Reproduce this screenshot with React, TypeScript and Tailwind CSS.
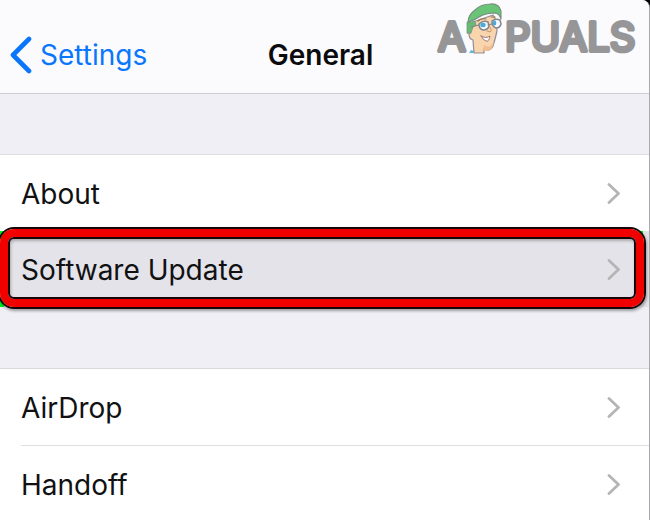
function Chevron() {
  return (
    <svg className="h-[22px] w-[14px] shrink-0" viewBox="0 0 14 22" fill="none" stroke="#b5b5b8" strokeWidth="2.8" strokeLinecap="round" strokeLinejoin="round" aria-hidden="true">
      <path d="M2 1.5 L11.5 10.5 L2 19.5" />
    </svg>
  );
}

function Row({ label }: { label: string }) {
  return (
    <button type="button" className="flex h-[76px] w-full items-center justify-between pt-[2px] pr-7 text-left text-[28px] leading-9 text-[#111113]">
      <span>{label}</span>
      <Chevron />
    </button>
  );
}

function Logo() {
  return (
    <svg className="absolute top-0 right-0 h-[72px] w-[216px]" viewBox="433 0 216 72" role="img" aria-label="Appuals">
      <g fill="#969698" stroke="#969698" strokeWidth="4" strokeLinejoin="round" strokeLinecap="round" fontFamily="Inter, sans-serif" fontWeight="400" fontSize="40">
        <text x="438" y="51">A</text>
        <text x="505" y="51">PUALS</text>
      </g>
      <g strokeLinejoin="round" strokeLinecap="round">
        <path d="M469 53 L471 50 Q475 52 481 50 L483 53Z" fill="#61b9df" />
        <path d="M470 31 Q467 24 473 22 L493 15 L496 20 L497 31 Q495 40 493 46 Q490 52 484 49 L484 53 L474 53 L473 40 Q469 39 469 34Z" fill="#f9d5ae" stroke="#918d96" strokeWidth="1.2" />
        <path d="M484 45 Q490 50 494 41 Q493 51 487 51 L483 50Z" fill="#f2bd8e" />
        <path d="M467 33 L467 22 Q472 22 475 21 L476 25 L473 27 L471 33Z" fill="#66bd72" stroke="#778b7e" strokeWidth="0.7" />
        <path d="M468 22 Q468 15 475 10 Q481 4 490 4 Q499 3 501 11 L501 19 Q500 15 496 13 Q485 13 479 17 Q475 20 468 22Z" fill="#69c478" stroke="#778b7e" strokeWidth="1.1" />
        <path d="M479 24 Q483 20 488 22 L489 26 Q488 30 483 30 Q479 29 479 24Z" fill="#f5faff" stroke="#85858b" strokeWidth="1.5" />
        <path d="M492 21 Q496 18 500 20 L501 24 Q500 28 496 28 Q492 27 492 21Z" fill="#f5faff" stroke="#85858b" strokeWidth="1.5" />
        <path d="M471 27 L479 25 M488 25 L492 24" fill="none" stroke="#85858b" strokeWidth="1.1" />
        <ellipse cx="483" cy="25" rx="2.7" ry="2.2" fill="#49a9d9" />
        <ellipse cx="494.5" cy="23" rx="1.8" ry="2.5" fill="#49a9d9" />
        <path d="M478 21 Q481 18 486 19 M491 17 L495 17" fill="none" stroke="#95734f" strokeWidth="1.2" />
        <path d="M489 26 Q493 30 490 32 L487 31" fill="none" stroke="#c59068" strokeWidth="1" />
        <path d="M481 36 Q486 39 490 36 Q489 42 486 41 Q483 40 481 36Z" fill="#fff" stroke="#9c7777" strokeWidth="1" />
      </g>
    </svg>
  );
}

export default function App() {
  return (
    <div className="min-h-screen bg-black font-['Inter','Liberation_Sans',sans-serif]">
      <main className="relative min-h-screen overflow-hidden rounded-tr-lg border-r border-[#a9a9ad] bg-[#f0eff5]">
        <header className="border-b border-[#d0d0d3] bg-[#fbfbfd]">
          <div className="grid h-[93px] grid-cols-[1fr_auto_1fr] items-center pt-[17px] pr-4 pl-2 text-[28px] leading-9">
            <button type="button" className="flex items-center gap-2 justify-self-start text-[#0a76fb]">
              <svg className="h-[38px] w-[24px]" viewBox="0 0 24 38" fill="none" stroke="currentColor" strokeWidth="4.6" strokeLinecap="round" strokeLinejoin="round" aria-hidden="true">
                <path d="M21 3 L5 19 L21 35" />
              </svg>
              Settings
            </button>
            <h1 className="font-semibold text-[#0b0b0d]">General</h1>
          </div>
          <Logo />
        </header>

        <section className="mt-[60px] border-t border-[#dddde2]">
          <div className="bg-white pl-[21px]">
            <Row label="About" />
          </div>
          <div className="relative bg-[#e4e3e9] pl-[21px]">
            <Row label="Software Update" />
            <span className="absolute top-0 left-0 h-2 w-1 bg-[#00ef18]" />
            <span className="absolute bottom-0 left-0 h-2 w-1 bg-[#00ef18]" />
            <span className="absolute top-0 right-[6px] h-2 w-1 bg-[#00ef18]" />
            <div className="pointer-events-none absolute -top-1 right-[3px] -bottom-[2px] -left-[2px] rounded-[16px] border-2 border-[#170608] shadow-[1px_2px_3px_rgba(0,0,0,0.35)]">
              <div className="h-full rounded-[14px] border-8 border-[#f10000]">
                <div className="h-full rounded-[6px] border-2 border-[#170608] shadow-[inset_1px_2px_3px_rgba(0,0,0,0.25)]" />
              </div>
            </div>
          </div>
        </section>

        <section className="mt-[61px] border-t border-[#d9d9de] bg-white pl-[21px]">
          <Row label="AirDrop" />
          <div className="border-t border-[#dedee1]">
            <Row label="Handoff" />
          </div>
        </section>
      </main>
    </div>
  );
}
